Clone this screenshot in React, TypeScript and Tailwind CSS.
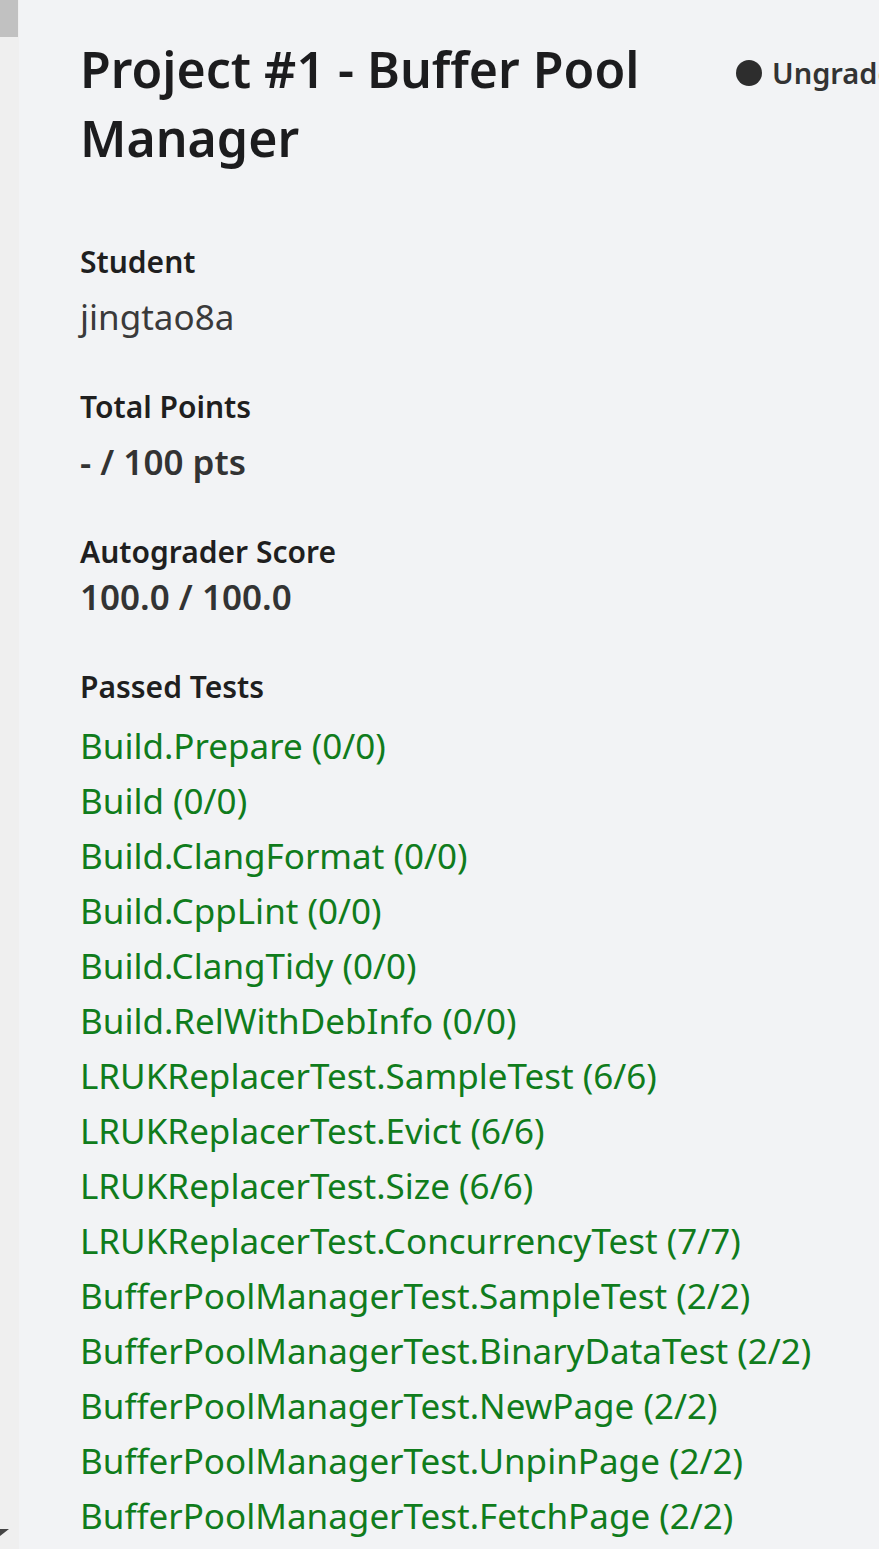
const tests = [
  "Build.Prepare (0/0)",
  "Build (0/0)",
  "Build.ClangFormat (0/0)",
  "Build.CppLint (0/0)",
  "Build.ClangTidy (0/0)",
  "Build.RelWithDebInfo (0/0)",
  "LRUKReplacerTest.SampleTest (6/6)",
  "LRUKReplacerTest.Evict (6/6)",
  "LRUKReplacerTest.Size (6/6)",
  "LRUKReplacerTest.ConcurrencyTest (7/7)",
  "BufferPoolManagerTest.SampleTest (2/2)",
  "BufferPoolManagerTest.BinaryDataTest (2/2)",
  "BufferPoolManagerTest.NewPage (2/2)",
  "BufferPoolManagerTest.UnpinPage (2/2)",
  "BufferPoolManagerTest.FetchPage (2/2)",
];

export default function App() {
  return (
    <div
      className="flex h-[1549px] w-[879px] overflow-hidden bg-[#f2f3f5] text-[#1f1f1f]"
      style={{ fontFamily: '"Noto Sans", sans-serif' }}
    >
      {/* scroll rail */}
      <div className="relative w-[19px] shrink-0 bg-[#efefef]">
        <div className="h-[37px] w-[18px] bg-[#c1c1c1]" />
        <div className="absolute top-[1529px] left-0 h-0 w-0 border-t-[7px] border-r-[9px] border-t-[#444] border-r-transparent" />
      </div>

      <main className="flex-1 pl-[61px] pt-[35px]">
        <div className="flex items-start">
          <h1 className="w-[640px] shrink-0 text-[50px] font-semibold leading-[69px] text-[#1c1c1e]">
            Project #1 - Buffer Pool Manager
          </h1>
          <div className="ml-[16px] mt-[20px] flex shrink-0 items-center gap-[10px] whitespace-nowrap text-[29px] font-semibold leading-[36px] text-[#333]">
            <span className="h-[26px] w-[26px] rounded-full bg-[#2d2d2d]" />
            Ungraded
          </div>
        </div>

        <section className="mt-[69px]">
          <h2 className="text-[30px] font-semibold leading-[40px]">Student</h2>
          <p className="mt-[11px] text-[35px] leading-[48px] text-[#3a3a3a]">jingtao8a</p>
        </section>

        <section className="mt-[46px]">
          <h2 className="text-[30px] font-semibold leading-[40px]">Total Points</h2>
          <p className="mt-[11px] text-[35px] font-semibold leading-[48px] text-[#333]">- / 100 pts</p>
        </section>

        <section className="mt-[46px]">
          <h2 className="text-[30px] font-semibold leading-[40px]">Autograder Score</h2>
          <p className="mt-[1px] text-[35px] font-semibold leading-[48px] text-[#333]">100.0 / 100.0</p>
        </section>

        <section className="mt-[46px]">
          <h2 className="text-[30px] font-semibold leading-[40px]">Passed Tests</h2>
          <ul className="mt-[11px]">
            {tests.map((t) => (
              <li key={t} className="text-[35px] leading-[55px] whitespace-nowrap text-[#107c1c]">
                {t}
              </li>
            ))}
          </ul>
        </section>
      </main>
    </div>
  );
}
